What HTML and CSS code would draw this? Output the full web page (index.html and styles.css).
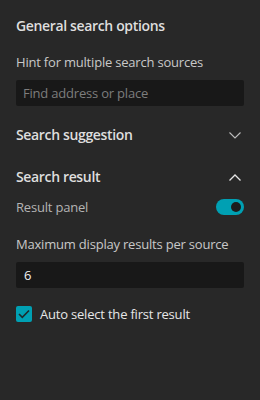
FILE: index.html
```html
<!DOCTYPE html>
<html>
<head>
  <title>Search settings</title>
  <meta charset="utf-8">
  <link rel="stylesheet" href="styles.css">
</head>
<body>
  <div class="panel">
    <div class="section">
      <div class="heading">General search options</div>
      <div class="label">Hint for multiple search sources</div>
      <div class="input placeholder">Find address or place</div>
    </div>
    <div class="collapse">
      <span class="heading">Search suggestion</span>
      <svg class="chevron" width="12" height="7" viewBox="0 0 12 7"><path d="M0.5 0.5 L6 6 L11.5 0.5" fill="none" stroke="#bdbdbd" stroke-width="1.1"/></svg>
    </div>
    <div class="collapse open">
      <span class="heading">Search result</span>
      <svg class="chevron" width="12" height="7" viewBox="0 0 12 7"><path d="M0.5 6.5 L6 1 L11.5 6.5" fill="none" stroke="#e6e6e6" stroke-width="1.3"/></svg>
    </div>
    <div class="row">
      <span class="sub">Result panel</span>
      <span class="toggle"><span class="knob"></span></span>
    </div>
    <div class="label max">Maximum display results per source</div>
    <div class="input value">6</div>
    <div class="check-row">
      <span class="checkbox">
        <svg width="12" height="10" viewBox="0 0 12 10"><path d="M1 5 L4.3 8.3 L11 1.5" fill="none" stroke="#1d2a2c" stroke-width="1.6"/></svg>
      </span>
      <span class="check-label">Auto select the first result</span>
    </div>
  </div>
</body>
</html>
```

FILE: styles.css
```css
html, body {
  margin: 0;
  background: #282828;
}

body {
  font-family: "Open Sans", "Lato", sans-serif;
  width: 260px;
  height: 400px;
}

.panel {
  padding: 16px 16px 0 16px;
}

.heading {
  font-size: 14px;
  font-weight: 600;
  color: #dedede;
  line-height: 20px;
  letter-spacing: -0.35px;
}

.label {
  font-size: 13px;
  color: #c8c8c8;
  line-height: 18px;
  margin-top: 17px;
  letter-spacing: -0.2px;
}

.input {
  height: 26px;
  margin-top: 9px;
  background: #181818;
  border-radius: 2px;
  font-size: 13px;
  line-height: 26px;
  padding: 0 7px;
  letter-spacing: -0.2px;
}

.placeholder {
  color: #7d7d7d;
}

.value {
  color: #f0f0f0;
  padding-left: 8px;
}

.collapse {
  display: flex;
  justify-content: space-between;
  align-items: center;
  margin-top: 19px;
  height: 20px;
  padding-right: 3px;
}

.collapse.open {
  margin-top: 22px;
}

.row {
  display: flex;
  justify-content: space-between;
  align-items: center;
  margin-top: 11px;
  height: 18px;
}

.sub {
  font-size: 13px;
  color: #b4b4b4;
  letter-spacing: -0.2px;
}

.toggle {
  width: 28px;
  height: 16px;
  border-radius: 8px;
  background: #00a0b3;
  display: flex;
  align-items: center;
  justify-content: flex-end;
  padding-right: 3px;
  box-sizing: border-box;
}

.knob {
  width: 10px;
  height: 10px;
  border-radius: 50%;
  background: #1c1c1c;
}

.max {
  margin-top: 19px;
}

.check-row {
  display: flex;
  align-items: center;
  margin-top: 17px;
}

.checkbox {
  width: 16px;
  height: 16px;
  background: #00a0b3;
  border-radius: 2px;
  display: flex;
  align-items: center;
  justify-content: center;
}

.check-label {
  font-size: 13px;
  color: #e6e6e6;
  margin-left: 8px;
  letter-spacing: -0.2px;
}
```
